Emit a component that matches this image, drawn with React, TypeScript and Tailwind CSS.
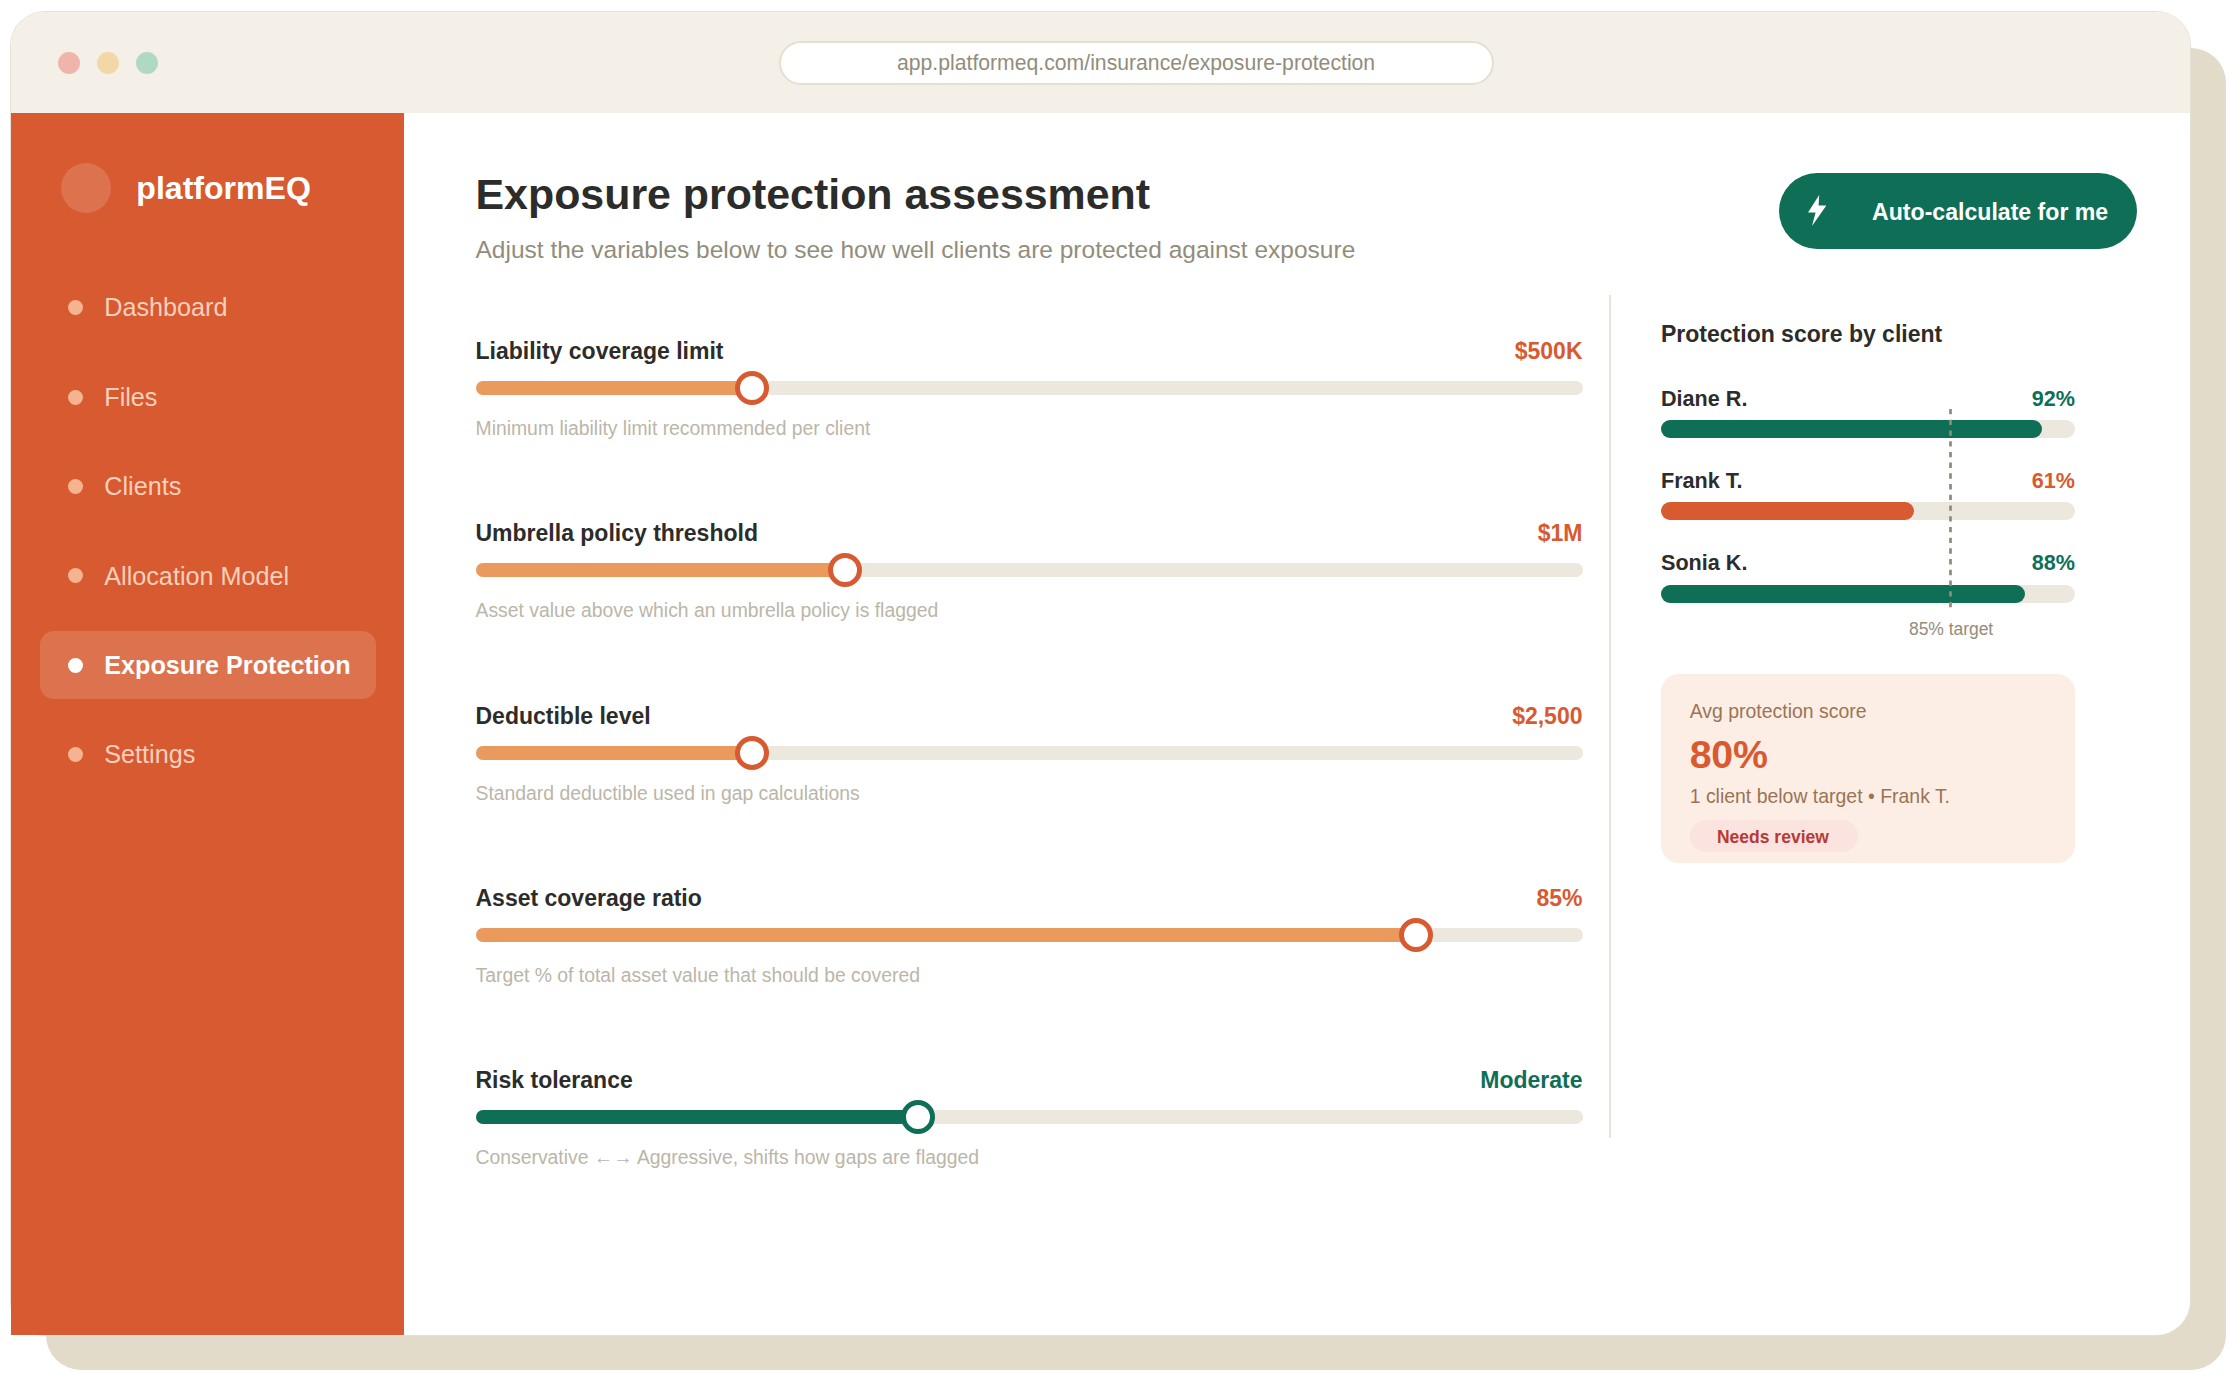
import clsx from "clsx";

const navItems = ["Dashboard", "Files", "Clients", "Allocation Model", "Exposure Protection", "Settings"];
const activeItem = "Exposure Protection";

type Tone = "orange" | "green";

const sliders: { label: string; value: string; hint: string; percent: number; tone: Tone }[] = [
  { label: "Liability coverage limit", value: "$500K", hint: "Minimum liability limit recommended per client", percent: 25, tone: "orange" },
  { label: "Umbrella policy threshold", value: "$1M", hint: "Asset value above which an umbrella policy is flagged", percent: 33.4, tone: "orange" },
  { label: "Deductible level", value: "$2,500", hint: "Standard deductible used in gap calculations", percent: 25, tone: "orange" },
  { label: "Asset coverage ratio", value: "85%", hint: "Target % of total asset value that should be covered", percent: 85, tone: "orange" },
  { label: "Risk tolerance", value: "Moderate", hint: "Conservative ←→ Aggressive, shifts how gaps are flagged", percent: 40, tone: "green" },
];

const clients: { name: string; score: number; tone: Tone }[] = [
  { name: "Diane R.", score: 92, tone: "green" },
  { name: "Frank T.", score: 61, tone: "orange" },
  { name: "Sonia K.", score: 88, tone: "green" },
];

function BrowserBar() {
  return (
    <header className="flex h-[101px] items-center rounded-t-[34px] bg-[#f4f0e7] pl-[46.5px]">
      <div className="flex gap-[17.3px]">
        <span className="size-[22px] rounded-full bg-[#efb5aa]" />
        <span className="size-[22px] rounded-full bg-[#f1d8a6]" />
        <span className="size-[22px] rounded-full bg-[#afd9c4]" />
      </div>
      <div className="ml-[620.5px] flex h-11 w-[715px] items-center justify-center rounded-full border-2 border-[#e5dfd0] bg-white pt-px text-[21.2px] text-[#928d7b]">
        app.platformeq.com/insurance/exposure-protection
      </div>
    </header>
  );
}

function Sidebar() {
  return (
    <aside className="w-[393px] shrink-0 bg-[#d85a30] pt-[50px]">
      <div className="flex items-center gap-[25.3px] pl-[50px]">
        <span className="size-[50px] rounded-full bg-white/15" />
        <span className="text-[32.1px] leading-[50px] font-bold text-white">platformEQ</span>
      </div>
      <nav className="mx-[29px] mt-[60.8px] flex w-[336px] flex-col gap-[21.35px]">
        {navItems.map((item) => {
          const active = item === activeItem;
          return (
            <a
              key={item}
              className={clsx(
                "flex h-[68px] items-center gap-[21.2px] rounded-[14px] pl-[28.3px] text-[25.2px] whitespace-nowrap",
                active ? "bg-white/15 font-bold text-white" : "text-[#f9d0bc]",
              )}
            >
              <span className={clsx("size-[14.8px] rounded-full", active ? "bg-white" : "bg-[#f4b48f]")} />
              <span className="pt-[1.2px]">{item}</span>
            </a>
          );
        })}
      </nav>
    </aside>
  );
}

function Slider({ label, value, hint, percent, tone }: (typeof sliders)[number]) {
  const green = tone === "green";
  return (
    <div className="h-[182.3px]">
      <div className="flex justify-between text-[23px] leading-7 font-bold">
        <span className="text-[#2c2c2a]">{label}</span>
        <span className={green ? "text-[#0f6e56]" : "text-[#d85a30]"}>{value}</span>
      </div>
      <div className="relative mt-4 h-3.5 rounded-full bg-[#ece8dd]">
        <div
          className={clsx("h-full rounded-full", green ? "bg-[#0f6e56]" : "bg-[#eb9a5d]")}
          style={{ width: `${percent}%` }}
        />
        <span
          className={clsx(
            "absolute top-1/2 size-[34px] -translate-1/2 rounded-full border-5 bg-white",
            green ? "border-[#0f6e56]" : "border-[#d85a30]",
          )}
          style={{ left: `${percent}%` }}
        />
      </div>
      <p className="mt-[21px] text-[19.37px] leading-6 text-[#bbb6a8]">{hint}</p>
    </div>
  );
}

function ClientScores() {
  return (
    <div className="relative mt-[38.1px] flex flex-col gap-[29.4px]">
      {clients.map(({ name, score, tone }) => (
        <div key={name}>
          <div className="flex justify-between text-[21.6px] leading-[26px] font-bold">
            <span className="text-[#2c2c2a]">{name}</span>
            <span className={tone === "green" ? "text-[#0f6e56]" : "text-[#d85a30]"}>{score}%</span>
          </div>
          <div className="mt-[8.4px] mb-[0.4px] h-[18px] rounded-full bg-[#ece8dd]">
            <div
              className={clsx("h-full rounded-full", tone === "green" ? "bg-[#0f6e56]" : "bg-[#d85a30]")}
              style={{ width: `${score}%` }}
            />
          </div>
        </div>
      ))}
      <svg className="absolute top-[23.4px] left-[288.2px]" width="3" height="199" viewBox="0 0 3 199">
        <line x1="1.5" y1="0" x2="1.5" y2="198.7" stroke="#8f8b79" strokeWidth="2.7" strokeDasharray="5.36 5.36" />
      </svg>
    </div>
  );
}

function SummaryCard() {
  return (
    <div className="mt-[34.1px] h-[189.3px] rounded-[18px] bg-[#fceee5] px-[28.7px] pt-[24.5px] text-[#9a7454]">
      <p className="text-[19.45px] leading-6">Avg protection score</p>
      <p className="mt-[9.8px] text-[39.3px] leading-11 font-bold tracking-[-0.2px] text-[#d85a30]">80%</p>
      <p className="mt-2 text-[19.45px] leading-6">1 client below target • Frank T.</p>
      <div className="mt-[11.9px] h-8 w-[168px] rounded-full bg-[#fbe3e0] pt-px pl-[27.3px] text-[17.5px] leading-8 font-bold text-[#b83a33]">
        Needs review
      </div>
    </div>
  );
}

function AutoCalculateButton() {
  return (
    <button className="mt-[3.8px] flex h-[75.5px] w-[357.5px] items-center rounded-full bg-[#0f6e56] pl-[28.7px] text-[23.1px] font-bold whitespace-nowrap text-white">
      <svg width="18.4" height="31" viewBox="0 0 18.4 31" fill="currentColor">
        <path d="M11.2 0 0 17.6h7.6L4 31 18.4 10.4h-7.8z" />
      </svg>
      <span className="ml-[46px] pt-[3px]">Auto-calculate for me</span>
    </button>
  );
}

export default function App() {
  return (
    <div className="relative h-[1377px] w-[2238px] overflow-hidden bg-white pt-3 pl-[11px] font-['Liberation_Sans',Arial,sans-serif]">
      <div className="absolute top-12 left-[46px] h-[1322px] w-[2180px] rounded-[35px] bg-[#e2dbc9]" />
      <div className="relative h-[1322.5px] w-[2179px] rounded-[34px] bg-white shadow-[0_0_0_1px_#e6e1d5]">
        <BrowserBar />
        <div className="flex h-[1221.5px]">
          <Sidebar />
          <main className="flex-1 pt-[56.4px] pr-[53.5px] pl-[71.5px]">
            <div className="flex h-[125.6px] items-start justify-between">
              <div>
                <h1 className="text-[42.9px] leading-[50px] font-bold text-[#2c2c2a]">Exposure protection assessment</h1>
                <p className="mt-[15.2px] text-[24.5px] leading-[30px] text-[#928d7b]">
                  Adjust the variables below to see how well clients are protected against exposure
                </p>
              </div>
              <AutoCalculateButton />
            </div>
            <div className="flex">
              <section className="w-[1107px] shrink-0 pt-[42px]">
                {sliders.map((slider) => (
                  <Slider key={slider.label} {...slider} />
                ))}
              </section>
              <div className="ml-[26.5px] h-[843px] w-0.5 shrink-0 bg-[#e9e4d8]" />
              <section className="ml-[50px] w-[414px] shrink-0 pt-[24.7px]">
                <h2 className="text-[23px] leading-7 font-bold text-[#2c2c2a]">Protection score by client</h2>
                <ClientScores />
                <p className="mt-[15.2px] pl-[248px] text-[17.5px] leading-[22px] tracking-[-0.05px] text-[#928d7b]">85% target</p>
                <SummaryCard />
              </section>
            </div>
          </main>
        </div>
      </div>
    </div>
  );
}
